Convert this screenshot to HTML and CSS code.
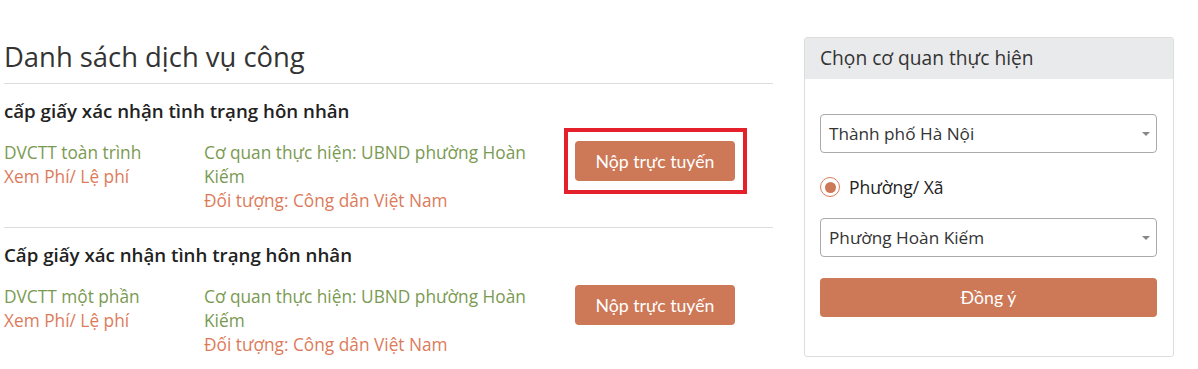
FILE: index.html
```html
<!DOCTYPE html>
<html lang="vi">
<head>
    <meta charset="UTF-8">
    <meta name="viewport" content="width=device-width, initial-scale=1.0">
    <title>Danh sách dịch vụ công</title>
    <link rel="stylesheet" href="styles.css">
</head>
<body>
    <div class="page">
        <!-- danh sách dịch vụ -->
        <div class="main">
            <h1 class="page-title">Danh sách dịch vụ công</h1>

            <div class="service">
                <h2 class="service-name">cấp giấy xác nhận tình trạng hôn nhân</h2>
                <div class="service-row">
                    <div class="service-type">
                        <div class="green">DVCTT toàn trình</div>
                        <div class="orange">Xem Phí/ Lệ phí</div>
                    </div>
                    <div class="service-info">
                        <div class="green">Cơ quan thực hiện: UBND phường Hoàn Kiếm</div>
                        <div class="orange">Đối tượng: Công dân Việt Nam</div>
                    </div>
                    <div class="service-action">
                        <button class="btn btn-submit highlighted">Nộp trực tuyến</button>
                    </div>
                </div>
            </div>

            <div class="service">
                <h2 class="service-name">Cấp giấy xác nhận tình trạng hôn nhân</h2>
                <div class="service-row">
                    <div class="service-type">
                        <div class="green">DVCTT một phần</div>
                        <div class="orange">Xem Phí/ Lệ phí</div>
                    </div>
                    <div class="service-info">
                        <div class="green">Cơ quan thực hiện: UBND phường Hoàn Kiếm</div>
                        <div class="orange">Đối tượng: Công dân Việt Nam</div>
                    </div>
                    <div class="service-action">
                        <button class="btn btn-submit">Nộp trực tuyến</button>
                    </div>
                </div>
            </div>
        </div>

        <!-- chọn cơ quan -->
        <div class="panel">
            <div class="panel-heading">Chọn cơ quan thực hiện</div>
            <div class="panel-body">
                <div class="fake-select">
                    <span>Thành phố Hà Nội</span>
                    <svg class="caret" width="8" height="4" viewBox="0 0 8 4"><path d="M0 0H8L4 4Z" fill="#888"/></svg>
                </div>
                <label class="radio">
                    <span class="radio-dot"></span>
                    <span>Phường/ Xã</span>
                </label>
                <div class="fake-select">
                    <span>Phường Hoàn Kiếm</span>
                    <svg class="caret" width="8" height="4" viewBox="0 0 8 4"><path d="M0 0H8L4 4Z" fill="#888"/></svg>
                </div>
                <button class="btn btn-block">Đồng ý</button>
            </div>
        </div>
    </div>
</body>
</html>
```

FILE: styles.css
```css
body {
    margin: 0;
    padding: 0;
    background: #fff;
    font-family: "Open Sans", "Noto Sans", sans-serif;
    color: #333;
}

.page {
    display: flex;
    align-items: flex-start;
    gap: 31px;
    padding: 37px 0 0 4px;
}

.main {
    width: 769px;
}

.page-title {
    margin: 0;
    height: 46px;
    font-size: 27.4px;
    font-weight: 400;
    line-height: 40px;
    color: #333;
    border-bottom: 1px solid #ddd;
}

.service {
    padding: 14px 0 14px;
    border-bottom: 1px solid #ddd;
}

.service:last-child {
    border-bottom: none;
}

.service-name {
    margin: 0 0 17px;
    font-size: 18.7px;
    font-weight: 600;
    line-height: 26px;
    color: #222;
}

.service-row {
    display: flex;
    font-size: 17.3px;
    line-height: 24px;
}

.service-type {
    width: 200px;
}

.service-info {
    width: 335px;
    height: 72px;
}

.service-action {
    padding-left: 36px;
}

.green {
    color: #7a9a52;
}

.orange {
    color: #dc7b5b;
}

.btn {
    display: block;
    border: none;
    border-radius: 4px;
    background: #cd7857;
    color: #fff;
    font-family: Lato, "Open Sans", sans-serif;
    font-size: 17.7px;
    cursor: pointer;
}

.btn-submit {
    width: 160px;
    height: 40px;
    position: relative;
}

/* khung đỏ đánh dấu */
.highlighted::after {
    content: '';
    position: absolute;
    left: -11px;
    right: -12px;
    top: -13px;
    bottom: -13px;
    border: 4px solid #e4202b;
}

.panel {
    width: 368px;
    border: 1px solid #ddd;
    border-radius: 3px;
}

.panel-heading {
    height: 41px;
    padding-left: 15px;
    background: #e9eaec;
    font-size: 19.2px;
    line-height: 40px;
    color: #333;
}

.panel-body {
    display: flex;
    flex-direction: column;
    padding: 35px 16px 39px 15px;
}

.fake-select {
    display: flex;
    align-items: center;
    justify-content: space-between;
    height: 37px;
    padding: 0 6px 0 8px;
    border: 1px solid #aaa;
    border-radius: 4px;
    font-size: 17.2px;
}

.radio {
    display: flex;
    align-items: center;
    gap: 9px;
    margin: 24px 0 21px;
    height: 20px;
    font-size: 17.5px;
    color: #222;
}

.radio-dot {
    width: 18px;
    height: 18px;
    border: 1px solid #dc7b5b;
    border-radius: 50%;
    display: flex;
    align-items: center;
    justify-content: center;
}

.radio-dot::before {
    content: '';
    width: 11px;
    height: 11px;
    border-radius: 50%;
    background: #cd7857;
}

.btn-block {
    width: 100%;
    height: 39px;
    margin-top: 21px;
}
```
